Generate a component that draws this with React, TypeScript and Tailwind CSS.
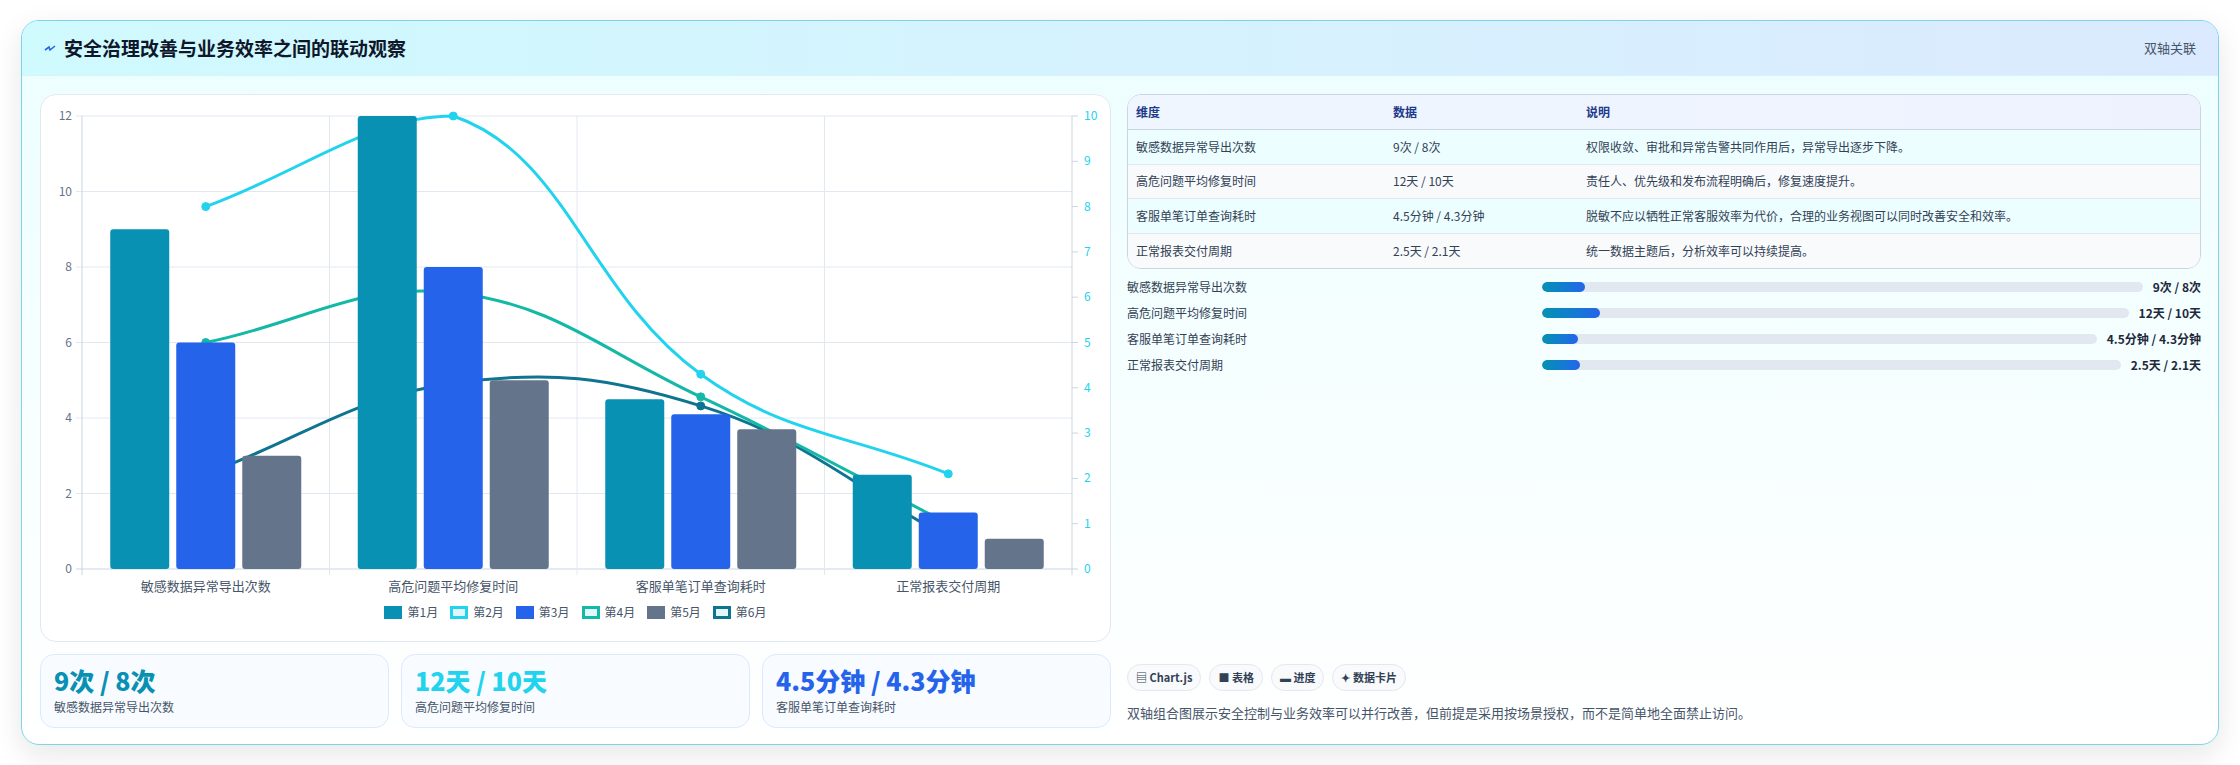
import React from "react";

const cats = ["敏感数据异常导出次数", "高危问题平均修复时间", "客服单笔订单查询耗时", "正常报表交付周期"];
const bars = [
  { c: "#0891b2", v: [9, 12, 4.5, 2.5] },
  { c: "#2563eb", v: [6, 8, 4.1, 1.5] },
  { c: "#64748b", v: [3, 5, 3.7, 0.8] },
];
const lines = [
  { c: "#0e7490", v: [2.1, 4.1, 3.6, 0.7] },
  { c: "#14b8a6", v: [5, 6.1, 3.8, 1.0] },
  { c: "#22d3ee", v: [8, 10, 4.3, 2.1] },
];
const L = 41, R = 1031, T = 21, B = 474;
const cw = (R - L) / 4;
const cx = (i: number) => L + cw * (i + 0.5);
const yL = (v: number) => B - (v / 12) * (B - T);
const yR = (v: number) => B - (v / 10) * (B - T);

function spline(pts: [number, number][]) {
  const t = 0.4;
  const cps = pts.map((p, i) => {
    const pr = pts[i - 1] || p, nx = pts[i + 1] || p;
    const d01 = Math.hypot(p[0] - pr[0], p[1] - pr[1]);
    const d12 = Math.hypot(nx[0] - p[0], nx[1] - p[1]);
    const s = d01 + d12 || 1;
    const fa = (t * d01) / s, fb = (t * d12) / s;
    const cl = (y: number) => Math.max(T, Math.min(B, y));
    return {
      a: [p[0] - fa * (nx[0] - pr[0]), cl(p[1] - fa * (nx[1] - pr[1]))],
      b: [p[0] + fb * (nx[0] - pr[0]), cl(p[1] + fb * (nx[1] - pr[1]))],
    };
  });
  let d = `M${pts[0][0]},${pts[0][1]}`;
  for (let i = 1; i < pts.length; i++) {
    d += ` C${cps[i - 1].b[0]},${cps[i - 1].b[1]} ${cps[i].a[0]},${cps[i].a[1]} ${pts[i][0]},${pts[i][1]}`;
  }
  return d;
}

function Chart() {
  const bw = 59, gap = 7;
  return (
    <svg width="1069" height="500" className="block">
      {[0, 2, 4, 6, 8, 10, 12].map((v) => (
        <g key={v}>
          <line x1={L - 6} x2={R} y1={yL(v)} y2={yL(v)} stroke={v === 0 ? "#cbd5e1" : "#e2e8f0"} />
          <text x={L - 10} y={yL(v) + 4} textAnchor="end" fontSize="12" fill="#64748b">{v}</text>
        </g>
      ))}
      {[0, 1, 2, 3, 4].map((i) => (
        <line key={i} x1={L + cw * i} x2={L + cw * i} y1={T} y2={B + 6} stroke={i === 0 || i === 4 ? "#cbd5e1" : "#e2e8f0"} />
      ))}
      {[0, 1, 2, 3, 4, 5, 6, 7, 8, 9, 10].map((v) => (
        <g key={v}>
          <line x1={R} x2={R + 6} y1={yR(v)} y2={yR(v)} stroke="#cbd5e1" />
          <text x={R + 12} y={yR(v) + 4} fontSize="12" fill="#22d3ee">{v}</text>
        </g>
      ))}
      {lines.map((l) => {
        const pts = l.v.map((v, i) => [cx(i), yR(v)] as [number, number]);
        return (
          <g key={l.c}>
            <path d={spline(pts)} fill="none" stroke={l.c} strokeWidth="3" />
            {pts.map((p, i) => (
              <circle key={i} cx={p[0]} cy={p[1]} r="4" fill={l.c} stroke={l.c} />
            ))}
          </g>
        );
      })}
      {cats.map((c, i) => (
        <g key={c}>
          {bars.map((b, j) => {
            const x = cx(i) - (3 * bw + 2 * gap) / 2 + j * (bw + gap);
            const y = yL(b.v[i]);
            return <rect key={j} x={x} y={y} width={bw} height={B - y} rx="3" fill={b.c} />;
          })}
          <text x={cx(i)} y={B + 22} textAnchor="middle" fontSize="13" fill="#475569">{c}</text>
        </g>
      ))}
    </svg>
  );
}

const legend = [
  { t: "第1月", c: "#0891b2", fill: true },
  { t: "第2月", c: "#22d3ee", fill: false },
  { t: "第3月", c: "#2563eb", fill: true },
  { t: "第4月", c: "#14b8a6", fill: false },
  { t: "第5月", c: "#64748b", fill: true },
  { t: "第6月", c: "#0e7490", fill: false },
];

const rows = [
  ["敏感数据异常导出次数", "9次 / 8次", "权限收敛、审批和异常告警共同作用后，异常导出逐步下降。"],
  ["高危问题平均修复时间", "12天 / 10天", "责任人、优先级和发布流程明确后，修复速度提升。"],
  ["客服单笔订单查询耗时", "4.5分钟 / 4.3分钟", "脱敏不应以牺牲正常客服效率为代价，合理的业务视图可以同时改善安全和效率。"],
  ["正常报表交付周期", "2.5天 / 2.1天", "统一数据主题后，分析效率可以持续提高。"],
];
const progress = [43, 58, 36, 38];

export default function App() {
  return (
    <div className="w-[2240px] h-[765px] bg-white p-[20px] pl-[21px]" style={{ fontFamily: '"Noto Sans CJK SC", "Noto Sans", sans-serif' }}>
      <div className="w-[2198px] h-[725px] rounded-[18px] border border-[#7dd3e8] bg-gradient-to-b from-[#ecfeff] to-white shadow-[0_10px_30px_rgba(15,23,42,0.1)] overflow-hidden flex flex-col">
        <div className="h-[55px] shrink-0 flex items-center justify-between px-[22px] bg-gradient-to-r from-[#cffafe] to-[#dbeafe] border-b border-[#d5f3fb]">
          <div className="flex items-center gap-[8px]">
            <svg width="12" height="10" viewBox="0 0 12 10"><path d="M1 7 L5 4 L6 7 L11 3" fill="none" stroke="#2563eb" strokeWidth="1.6" /></svg>
            <span className="text-[19px] font-bold text-[#0f172a]">安全治理改善与业务效率之间的联动观察</span>
          </div>
          <span className="text-[13px] text-[#475569]">双轴关联</span>
        </div>
        <div className="flex-1 grid grid-cols-[1071px_1074px] gap-[16px] px-[18px] pt-[18px] pb-[16px]">
          <div className="flex flex-col gap-[12px]">
            <div className="h-[548px] rounded-[16px] border border-[#e2e8f0] bg-white flex flex-col">
              <Chart />
              <div className="flex justify-center gap-[12px] mt-[8px] text-[12px] text-[#475569]">
                {legend.map((l) => (
                  <div key={l.t} className="flex items-center gap-[5px]">
                    <span className="w-[18px] h-[13px] border-[3px]" style={{ borderColor: l.c, background: l.fill ? l.c : "#e0f7fb" }} />
                    {l.t}
                  </div>
                ))}
              </div>
            </div>
            <div className="grid grid-cols-3 gap-[12px]">
              {[
                ["9次 / 8次", "敏感数据异常导出次数", "text-[#0891b2]"],
                ["12天 / 10天", "高危问题平均修复时间", "text-[#22d3ee]"],
                ["4.5分钟 / 4.3分钟", "客服单笔订单查询耗时", "text-[#2563eb]"],
              ].map(([v, t, c]) => (
                <div key={t} className="h-[74px] rounded-[14px] border border-[#dbeafe] bg-[#f8fbff] px-[13px] pt-[9px]">
                  <div className={`text-[25px] font-extrabold leading-[32px] ${c}`}>{v}</div>
                  <div className="text-[12px] text-[#475569] mt-[2px]">{t}</div>
                </div>
              ))}
            </div>
          </div>
          <div className="flex flex-col">
            <div className="rounded-[14px] border border-[#cbd5e1] overflow-hidden bg-white">
              <div className="grid grid-cols-[257px_193px_1fr] h-[35px] items-center px-[8px] bg-gradient-to-r from-[#eff6ff] to-[#eef2ff] border-b border-[#cbd5e1] text-[12px] font-bold text-[#1e3a8a]">
                <span>维度</span><span>数据</span><span>说明</span>
              </div>
              {rows.map((r, i) => (
                <div key={i} className={`grid grid-cols-[257px_193px_1fr] h-[34.5px] items-center px-[8px] text-[12px] text-[#334155] ${i < 3 ? "border-b border-[#e2e8f0]" : ""} ${i % 2 === 0 ? "bg-[#ecfeff]" : "bg-[#f8fafc]"}`}>
                  <span>{r[0]}</span><span>{r[1]}</span><span>{r[2]}</span>
                </div>
              ))}
            </div>
            <div className="flex flex-col gap-[6px] mt-[8px]">
              {rows.map((r, i) => (
                <div key={i} className="flex items-center h-[20px] text-[12px] text-[#334155]">
                  <span className="w-[415px] shrink-0">{r[0]}</span>
                  <div className="flex-1 h-[10px] rounded-full bg-[#e2e8f0] overflow-hidden">
                    <div className="h-full rounded-full bg-gradient-to-r from-[#0891b2] to-[#2563eb]" style={{ width: progress[i] }} />
                  </div>
                  <span className="ml-[10px] font-bold text-[#1e293b] text-right">{r[1]}</span>
                </div>
              ))}
            </div>
            <div className="mt-auto flex gap-[8px]">
              {["▤ Chart.js", "■ 表格", "▬ 进度", "✦ 数据卡片"].map((b) => (
                <span key={b} className="h-[27px] px-[8px] flex items-center rounded-full border border-[#e2e8f0] bg-[#f8fafc] text-[11px] font-bold text-[#334155]">{b}</span>
              ))}
            </div>
            <div className="mt-[12px] mb-[6px] text-[13px] text-[#475569]">双轴组合图展示安全控制与业务效率可以并行改善，但前提是采用按场景授权，而不是简单地全面禁止访问。</div>
          </div>
        </div>
      </div>
    </div>
  );
}
